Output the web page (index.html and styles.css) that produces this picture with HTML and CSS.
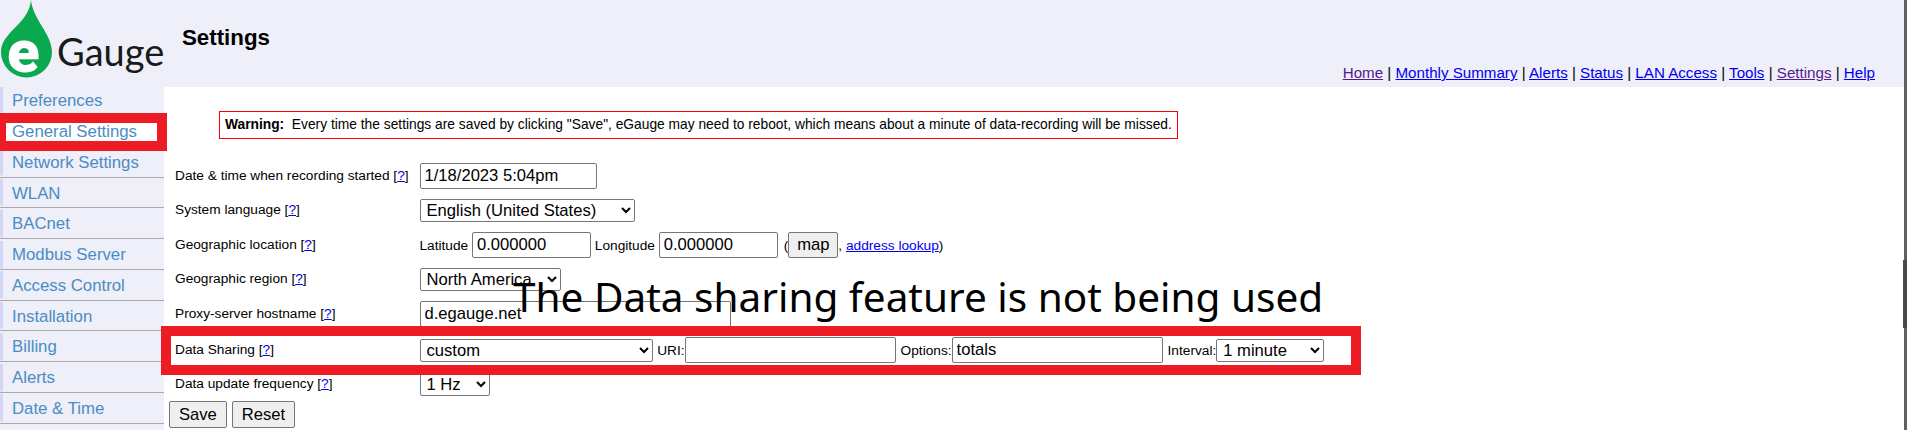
FILE: index.html
```html
<!DOCTYPE html>
<html lang="en">
<head>
<meta charset="utf-8">
<title>eGauge Settings</title>
<link rel="stylesheet" href="styles.css">
</head>
<body>
<div class="page">
  <header class="header">
    <svg class="logo" width="170" height="87" viewBox="0 0 170 87">
      <path class="drop" d="M31 0C33 20 52 34 52 52A25.500 25.500 0 0 1 1 52C1 32 29 24 31 0Z"/>
      <text class="logo-e" x="7" y="72">e</text>
      <text class="logo-name" x="57" y="66">Gauge</text>
    </svg>
    <h1 class="title">Settings</h1>
    <nav class="topnav">
      <a class="visited" href="#">Home</a> | <a href="#">Monthly Summary</a> | <a href="#">Alerts</a> | <a href="#">Status</a> | <a href="#">LAN Access</a> | <a href="#">Tools</a> | <a class="visited" href="#">Settings</a> | <a href="#">Help</a>
    </nav>
  </header>
  <div class="body">
    <ul class="sidebar">
      <li>Preferences</li>
      <li class="picked"><span>General Settings</span></li>
      <li>Network Settings</li>
      <li>WLAN</li>
      <li>BACnet</li>
      <li>Modbus Server</li>
      <li>Access Control</li>
      <li>Installation</li>
      <li>Billing</li>
      <li>Alerts</li>
      <li>Date &amp; Time</li>
    </ul>
    <main class="main">
      <p class="warning"><b>Warning:</b>&nbsp;&nbsp;Every time the settings are saved by clicking "Save", eGauge may need to reboot, which means about a minute of data-recording will be missed.</p>
      <div class="form">
        <div class="label">Date &amp; time when recording started [<a href="#">?</a>]</div>
        <div class="field"><input class="w-date" type="text" value="1/18/2023 5:04pm"></div>

        <div class="label">System language [<a href="#">?</a>]</div>
        <div class="field"><select class="w-lang"><option>English (United States)</option></select></div>

        <div class="label">Geographic location [<a href="#">?</a>]</div>
        <div class="field">Latitude&nbsp;<input class="w-coord" type="text" value="0.000000">&nbsp;Longitude&nbsp;<input class="w-coord" type="text" value="0.000000"><span class="paren">(</span><button class="btn-map" type="button">map</button>, <a href="#">address lookup</a>)</div>

        <div class="label">Geographic region [<a href="#">?</a>]</div>
        <div class="field"><select class="w-region"><option>North America</option></select></div>

        <div class="label">Proxy-server hostname [<a href="#">?</a>]</div>
        <div class="field"><input class="w-proxy" type="text" value="d.egauge.net"></div>

        <div class="label">Data Sharing [<a href="#">?</a>]</div>
        <div class="field field-share"><select class="w-share"><option>custom</option></select>&nbsp;URI:<input class="w-uri" type="text">&nbsp;Options:<input class="w-uri" type="text" value="totals">&nbsp;Interval:<select class="w-interval"><option>1 minute</option></select></div>

        <div class="label">Data update frequency [<a href="#">?</a>]</div>
        <div class="field"><select class="w-hz"><option>1 Hz</option></select></div>
      </div>
      <div class="actions">
        <button class="btn" type="button">Save</button>
        <button class="btn" type="button">Reset</button>
      </div>
    </main>
  </div>
  <div class="mark mark-general"></div>
  <div class="mark mark-sharing"></div>
  <div class="callout">The Data sharing feature is not being used</div>
  <div class="scrollbar"><div class="scrollbar-thumb"></div></div>
</div>
</body>
</html>
```
FILE: styles.css
```css
* { box-sizing: border-box; }
html, body { margin: 0; padding: 0; height: 100%; overflow: hidden; background: #fff; }
body { font-family: "Liberation Sans", Arial, sans-serif; color: #000; }
a { color: #0000ee; }
a.visited { color: #551a8b; }

.page { position: relative; width: 1907px; height: 430px; overflow: hidden; }

.header { position: relative; display: flex; height: 87px; background: #eeeff8; }
.logo { flex: none; }
.drop { fill: #0aa84f; }
.logo-e { font: 900 60px "Roboto", sans-serif; fill: #fff; }
.logo-name { font: 400 38px "Lato", sans-serif; fill: #1a1a1a; }
.title { margin: 24px 0 0 12px; font-size: 22.300px; line-height: 28px; font-weight: 700; }
.topnav { margin-left: auto; margin-right: 32px; align-self: flex-end; padding-bottom: 5px; font-size: 15.150px; line-height: 18px; }

.body { display: flex; height: 343px; }
.sidebar { flex: none; width: 164px; margin: 0; padding: 0; list-style: none; background: #eeeff8; font-size: 16.800px; color: #4a8cc4; }
.sidebar li {
  height: 30.750px;
  padding-left: 12px;
  line-height: 31px;
  border-bottom: 1.500px solid #aaa;
  background: linear-gradient(#d5d5f5, #d5d5f5) no-repeat 0 1.500px / 3px calc(100% - 2.500px);
}
.sidebar li:first-child { height: 29px; line-height: 27.500px; background-position: 0 0; }
.sidebar .picked { padding-left: 0; }
.sidebar .picked span { display: block; margin-left: 3px; padding-left: 9px; background: #fff; }

.main { flex: 1; padding: 24px 0 0 5px; }
.warning { margin: 0 0 24px 50px; width: 959px; height: 28px; padding: 0 5px; border: 1px solid #f00; font-size: 13.790px; line-height: 26px; white-space: nowrap; }
.form { display: grid; grid-template-columns: 244.500px 1fr; row-gap: 10px; align-items: center; padding-left: 6px; font-size: 13.700px; }
.label { white-space: nowrap; margin-bottom: 2px; }
.field { display: flex; align-items: center; white-space: pre; }
.field-share { word-spacing: 0.900px; }
.paren { margin-left: 6px; }

input, select, .btn, .btn-map { font-family: "Liberation Sans", Arial, sans-serif; font-size: 16.600px; color: #000; }
input { height: 26px; padding: 0 4px; border: 1px solid #767676; border-radius: 2px; background: #fff; }
select { height: 23px; padding: 0 0 0 2px; border: 1px solid #767676; border-radius: 2px; background: #fff; }
.btn, .btn-map { height: 26px; padding: 0 9px; border: 1px solid #767676; border-radius: 2px; background: #efefef; }
.w-date { width: 177px; }
.w-lang { width: 215px; }
.w-coord { width: 119px; }
.w-region { width: 141px; }
.w-proxy { width: 311px; }
.w-share { width: 233px; }
.w-uri { width: 211.300px; }
.w-interval { width: 108px; }
.w-hz { width: 70px; }
.btn-map { width: 50px; padding: 0; }

.actions { display: flex; gap: 5px; margin-top: 5px; }
.btn { height: 27px; }

.mark { position: absolute; border-style: solid; border-color: #ed1c24; }
.mark-general { left: 0; top: 113px; width: 167px; height: 38px; border-width: 10px 10px 10px 6px; }
.mark-sharing { left: 161px; top: 326px; width: 1200px; height: 49px; border-width: 10px; }
.callout { position: absolute; left: 513px; top: 270px; font-family: "Noto Sans", sans-serif; font-size: 40.500px; line-height: 54px; white-space: nowrap; color: #000; }
.scrollbar { position: absolute; right: 0; top: 0; width: 3.500px; height: 430px; background: #5f6064; }
.scrollbar-thumb { margin: 260px 0 0 -1px; width: 4.500px; height: 68px; background: #48494d; }
```
